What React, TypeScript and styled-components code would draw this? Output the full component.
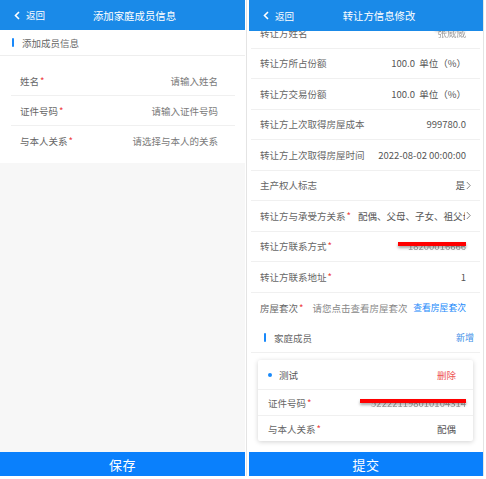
import React from "react";
import styled, { createGlobalStyle } from "styled-components";

const GlobalStyle = createGlobalStyle`
    html, body {
        margin: 0;
        padding: 0;
        background: #ffffff;
    }
    body {
        font-family: "Noto Sans CJK SC", "Noto Sans", "Liberation Sans", sans-serif;
        -webkit-font-smoothing: antialiased;
    }
`;

const Screens = styled.div`
    display: flex;
    width: 486px;
    height: 479px;
    align-items: flex-start;
`;

const Phone = styled.div`
    display: flex;
    flex-direction: column;
    width: 245px;
    height: 476px;
    background: #f7f7f7;
    overflow: hidden;
`;

const PhoneFrame = styled.div`
    display: flex;
    flex-direction: column;
    width: 234px;
    height: 476px;
    margin-left: 1px;
    padding: 0 0 0 2px;
    border-left: 1px solid #e4e4e4;
    border-right: 1px solid #e4e4e4;
    background: #ffffff;
    overflow: hidden;
`;

const NavBar = styled.div<{ tall?: boolean }>`
    flex: none;
    display: flex;
    align-items: center;
    height: ${p => (p.tall ? "31px" : "30px")};
    padding-left: 14px;
    background: #1a8ae8;
    color: #ffffff;
    position: relative;
    z-index: 2;
`;

const Back = styled.div`
    display: flex;
    align-items: center;
    gap: 6px;
    font-size: 9.5px;
    width: 60px;
`;

const NavTitle = styled.div<{ shift: number }>`
    flex: 1;
    text-align: center;
    font-size: 10.4px;
    padding-right: ${p => p.shift}px;
`;

const Chevron = () => (
    <svg width="6" height="9" viewBox="0 0 6 9">
        <path d="M5 1 L1.5 4.5 L5 8" fill="none" stroke="#fff" strokeWidth="1.6" />
    </svg>
);

const SectionHead = styled.div<{ bordered?: boolean }>`
    display: flex;
    align-items: center;
    height: ${p => (p.bordered ? "25px" : "29px")};
    padding: 0 12px;
    background: #ffffff;
    border-bottom: 1px solid #eeeeee;
    font-size: 9.5px;
    color: #666666;
`;

const SectionBar = styled.span`
    width: 2px;
    height: 9px;
    background: #1989fa;
    border-radius: 1px;
    margin-right: 8px;
`;

const SectionAction = styled.span`
    margin-left: auto;
    color: #3d8fe8;
    font-size: 9px;
    margin-right: -3px;
`;

const Form = styled.div`
    background: #ffffff;
    padding: 10px 10px 7px 11px;
`;

const Field = styled.div<{ last?: boolean }>`
    display: flex;
    align-items: center;
    height: 30px;
    padding: 0 17px 0 9px;
    border-bottom: ${p => (p.last ? "none" : "1px solid #f0f0f0")};
    box-sizing: border-box;
    font-size: 9.5px;
`;

const Label = styled.span`
    color: #666666;
    white-space: nowrap;
    flex: none;
`;

const Star = styled.span`
    color: #ee3a3a;
    margin-left: 1px;
`;

const Placeholder = styled.span`
    margin-left: auto;
    color: #7a7a7a;
`;

const Filler = styled.div`
    flex: 1;
`;

const SubmitButton = styled.div`
    flex: none;
    height: 24px;
    display: flex;
    align-items: center;
    justify-content: center;
    background: #0a80fc;
    color: #ffffff;
    font-size: 13px;
    letter-spacing: 0.5px;
`;

const Scroll = styled.div`
    flex: 1;
    overflow: hidden;
`;

const List = styled.div`
    margin-top: -13px;
`;

const Row = styled.div<{ arrow?: boolean; noLine?: boolean }>`
    display: flex;
    align-items: center;
    height: 30.5px;
    margin: 0 3px 0 2px;
    padding: 0 ${p => (p.arrow ? "9px" : "14px")} 0 9px;
    border-bottom: ${p => (p.noLine ? "none" : "1px solid #f0f0f0")};
    box-sizing: border-box;
    font-size: 9.5px;
`;

const Value = styled.span<{ clip?: boolean }>`
    margin-left: auto;
    color: #555555;
    white-space: pre;
    position: relative;
    ${p => (p.clip ? "overflow: hidden; max-width: 107px;" : "")}
`;

const Hint = styled.span`
    color: #888888;
    margin-left: 9px;
    white-space: nowrap;
`;

const Link = styled.span`
    color: #1989fa;
    margin-left: auto;
    font-size: 8.8px;
    white-space: nowrap;
`;

const ArrowIcon = styled.svg`
    flex: none;
    margin-left: 1px;
`;

const Arrow = () => (
    <ArrowIcon width="5" height="9" viewBox="0 0 5 9">
        <path d="M0.8 1 L4.2 4.5 L0.8 8" fill="none" stroke="#777" strokeWidth="0.9" />
    </ArrowIcon>
);

const Blurred = styled.span`
    color: #a0a0a0;
    filter: blur(0.7px);
`;

const Redact = styled.span<{ w: number; top: number; right: number }>`
    position: absolute;
    right: ${p => p.right}px;
    top: ${p => p.top}px;
    width: ${p => p.w}px;
    height: 4px;
    background: #ff0000;
    box-shadow: 0 2px 3px rgba(0, 0, 0, 0.35);
`;

const MemberHead = styled(SectionHead)`
    margin: 0 3px 0 2px;
    padding: 0 9px 0 13px;
    height: 29px;
    border-bottom: 1px solid #f0f0f0;
`;

const Card = styled.div`
    margin: 7px 10px 0 9px;
    background: #ffffff;
    box-shadow: 0 1px 5px rgba(0, 0, 0, 0.18);
    border-radius: 2px;
`;

const CardRow = styled.div<{ tall?: boolean; last?: boolean; wide?: boolean }>`
    display: flex;
    align-items: center;
    height: ${p => (p.tall ? "29px" : "25px")};
    padding: 0 ${p => (p.wide ? "7px" : "17px")} 0 10px;
    border-bottom: ${p => (p.last ? "none" : "1px solid #f0f0f0")};
    font-size: 9.5px;
`;

const Dot = styled.span`
    width: 4px;
    height: 4px;
    border-radius: 50%;
    background: #1989fa;
    margin-right: 7px;
`;

const MemberName = styled.span`
    color: #555555;
`;

const Delete = styled.span`
    margin-left: auto;
    color: #ee5555;
`;

const rows: { label: string; value: string }[] = [
    { label: "转让方所占份额", value: "100.0  单位（%）" },
    { label: "转让方交易份额", value: "100.0  单位（%）" },
    { label: "转让方上次取得房屋成本", value: "999780.0" },
    { label: "转让方上次取得房屋时间", value: "2022-08-02 00:00:00" },
];

const AddMember = () => (
    <Phone>
        <NavBar>
            <Back>
                <Chevron />
                返回
            </Back>
            <NavTitle shift={50}>添加家庭成员信息</NavTitle>
        </NavBar>
        <SectionHead bordered>
            <SectionBar />
            添加成员信息
        </SectionHead>
        <Form>
            <Field>
                <Label>姓名<Star>*</Star></Label>
                <Placeholder>请输入姓名</Placeholder>
            </Field>
            <Field>
                <Label>证件号码<Star>*</Star></Label>
                <Placeholder>请输入证件号码</Placeholder>
            </Field>
            <Field last>
                <Label>与本人关系<Star>*</Star></Label>
                <Placeholder>请选择与本人的关系</Placeholder>
            </Field>
        </Form>
        <Filler />
        <SubmitButton>保存</SubmitButton>
    </Phone>
);

const EditTransferor = () => (
    <PhoneFrame>
        <NavBar tall>
            <Back>
                <Chevron />
                返回
            </Back>
            <NavTitle shift={48}>转让方信息修改</NavTitle>
        </NavBar>
        <Scroll>
            <List>
                <Row>
                    <Label>转让方姓名</Label>
                    <Value>
                        <Blurred>张威威</Blurred>
                        <Redact w={30} top={-1} right={1} />
                    </Value>
                </Row>
                {rows.map(r => (
                    <Row key={r.label}>
                        <Label>{r.label}</Label>
                        <Value>{r.value}</Value>
                    </Row>
                ))}
                <Row arrow>
                    <Label>主产权人标志</Label>
                    <Value>是</Value>
                    <Arrow />
                </Row>
                <Row arrow>
                    <Label>转让方与承受方关系<Star>*</Star></Label>
                    <Value clip>配偶、父母、子女、祖父母、外祖父母、孙子女、外孙子女</Value>
                    <Arrow />
                </Row>
                <Row>
                    <Label>转让方联系方式<Star>*</Star></Label>
                    <Value>
                        <Blurred>18200016666</Blurred>
                        <Redact w={68} top={3} right={0} />
                    </Value>
                </Row>
                <Row>
                    <Label>转让方联系地址<Star>*</Star></Label>
                    <Value>1</Value>
                </Row>
                <Row noLine>
                    <Label>房屋套次<Star>*</Star></Label>
                    <Hint>请您点击查看房屋套次</Hint>
                    <Link>查看房屋套次</Link>
                </Row>
                <MemberHead>
                    <SectionBar />
                    家庭成员
                    <SectionAction>新增</SectionAction>
                </MemberHead>
                <Card>
                    <CardRow tall>
                        <Dot />
                        <MemberName>测试</MemberName>
                        <Delete>删除</Delete>
                    </CardRow>
                    <CardRow wide>
                        <Label>证件号码<Star>*</Star></Label>
                        <Value>
                            <Blurred>522221198010104314</Blurred>
                            <Redact w={106} top={3} right={0} />
                        </Value>
                    </CardRow>
                    <CardRow last>
                        <Label>与本人关系<Star>*</Star></Label>
                        <Value>配偶</Value>
                    </CardRow>
                </Card>
            </List>
        </Scroll>
        <SubmitButton>提交</SubmitButton>
    </PhoneFrame>
);

export default function App() {
    return (
        <>
            <GlobalStyle />
            <Screens>
                <AddMember />
                <EditTransferor />
            </Screens>
        </>
    );
}
